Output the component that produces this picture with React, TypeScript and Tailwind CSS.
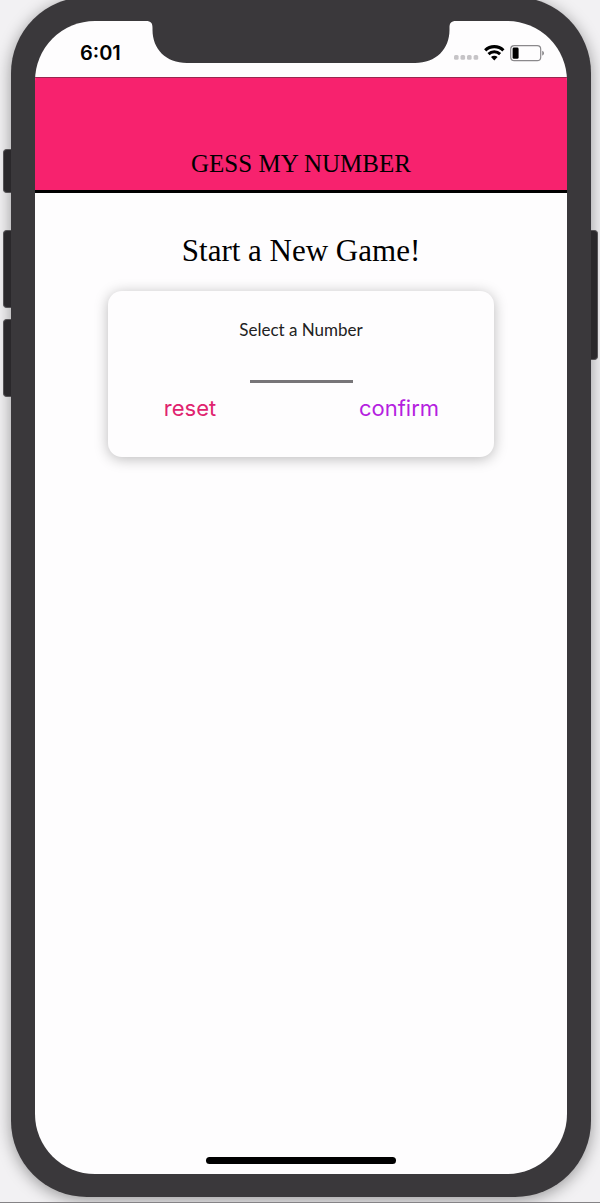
import { useState } from "react";

function StatusBar() {
  return (
    <div className="flex h-14 shrink-0 items-start justify-between pt-5 pr-[22px] pl-[45px]">
      <time className="font-['Inter',sans-serif] text-[20px] leading-6 font-semibold">6:01</time>
      <div className="flex h-6 items-center gap-[5px]">
        <svg width="25" height="5" viewBox="0 0 25 5" className="mt-2" fill="#c6c4c7" aria-hidden="true">
          <rect x="0" y="0" width="4.6" height="4.8" rx="1.5" />
          <rect x="6.5" y="0" width="4.6" height="4.8" rx="1.5" />
          <rect x="13" y="0" width="4.6" height="4.8" rx="1.5" />
          <rect x="19.6" y="0" width="4.6" height="4.8" rx="1.5" />
        </svg>
        <svg width="21" height="16" viewBox="0 0 21 16" aria-hidden="true">
          <path d="M1.2 5.3a13.2 13.2 0 0 1 18.2 0" fill="none" stroke="#000" strokeWidth="3.2" />
          <path d="M4.5 9.1a8.4 8.4 0 0 1 11.6 0" fill="none" stroke="#000" strokeWidth="3" />
          <path d="M10.3 15.4 7 12.1a4.7 4.7 0 0 1 6.6 0Z" />
        </svg>
        <svg width="35" height="17" viewBox="0 0 35 17" aria-hidden="true">
          <rect x="0.7" y="0.7" width="30" height="15" rx="3.5" fill="none" stroke="#8b898c" strokeWidth="1.2" />
          <rect x="2.6" y="2.6" width="6" height="11.2" rx="1.4" />
          <path d="M32.2 5.8c2.4.8 2.4 4 0 4.8Z" fill="#8b898c" />
        </svg>
      </div>
    </div>
  );
}

function Notch() {
  return (
    <svg
      className="absolute top-0 left-1/2 -translate-x-1/2"
      width="310"
      height="43"
      viewBox="0 0 310 43"
      fill="#3a383b"
      aria-hidden="true"
    >
      <path d="M0 0C5 0 6.5 2 6.5 7V9C6.5 28 20 42 41 42H269C290 42 303.5 28 303.5 9V7C303.5 2 305 0 310 0Z" />
    </svg>
  );
}

function Header({ title }: { title: string }) {
  return (
    <header className="flex h-[116px] shrink-0 items-end justify-center border-t border-b-3 border-t-[#99264f] border-b-black bg-[#f7226e] pb-2.5">
      <h1 className="font-['Liberation_Serif',serif] text-[25px] leading-8">{title}</h1>
    </header>
  );
}

function StartGame() {
  const [value, setValue] = useState("");
  return (
    <main className="flex grow flex-col items-center pt-[38px]">
      <h2 className="font-['Liberation_Serif',serif] text-[31px] leading-10">Start a New Game!</h2>
      <form
        className="mt-5 flex w-[386px] max-w-[90%] flex-col items-center rounded-[14px] bg-[#fefdfe] px-[26px] pt-6 pb-8 shadow-[0_2px_14px_rgba(0,0,0,0.27)]"
        onSubmit={(event) => event.preventDefault()}
      >
        <label htmlFor="number" className="font-['Lato',sans-serif] text-[17px] leading-[30px] text-[#222]">
          Select a Number
        </label>
        <input
          id="number"
          inputMode="numeric"
          maxLength={2}
          value={value}
          onChange={(event) => setValue(event.target.value.replace(/[^0-9]/g, ""))}
          className="mt-1.5 h-8 w-[103px] border-b-3 border-[#777578] text-center text-lg outline-none"
        />
        <div className="flex w-full justify-between pt-2 font-['Inter',sans-serif] text-[22px] leading-[34px]">
          <button type="button" onClick={() => setValue("")} className="w-28 text-[#e0236f]">
            reset
          </button>
          <button type="submit" className="w-[138px] text-[#b51fe0]">
            confirm
          </button>
        </div>
      </form>
    </main>
  );
}

export default function App() {
  return (
    <div className="flex min-h-screen flex-col overflow-hidden border-b border-[#858386] bg-[#f2f1f3] pr-[9px] pb-[5px] pl-[11px]">
      <div className="relative -mt-[3px] flex grow flex-col rounded-[76px] bg-[#3a383b] p-6 pb-[23px] shadow-[0_3px_16px_rgba(0,0,0,0.38)]">
        <span className="absolute top-[152px] -left-2 h-11 w-2 rounded-l-sm border border-r-0 border-[#555356] bg-[#2a282b]" />
        <span className="absolute top-[233px] -left-2 h-[78px] w-2 rounded-l-sm border border-r-0 border-[#555356] bg-[#2a282b]" />
        <span className="absolute top-[322px] -left-2 h-[78px] w-2 rounded-l-sm border border-r-0 border-[#555356] bg-[#2a282b]" />
        <span className="absolute top-[233px] -right-[7px] h-[130px] w-[7px] rounded-r-sm border border-l-0 border-[#555356] bg-[#2a282b]" />
        <div className="relative flex grow flex-col overflow-hidden rounded-[60px] bg-[#fefdfe] text-black">
          <StatusBar />
          <Notch />
          <Header title="GESS MY NUMBER" />
          <StartGame />
          <div className="mb-2.5 h-[7px] w-[190px] self-center rounded-full bg-black" />
        </div>
      </div>
    </div>
  );
}
